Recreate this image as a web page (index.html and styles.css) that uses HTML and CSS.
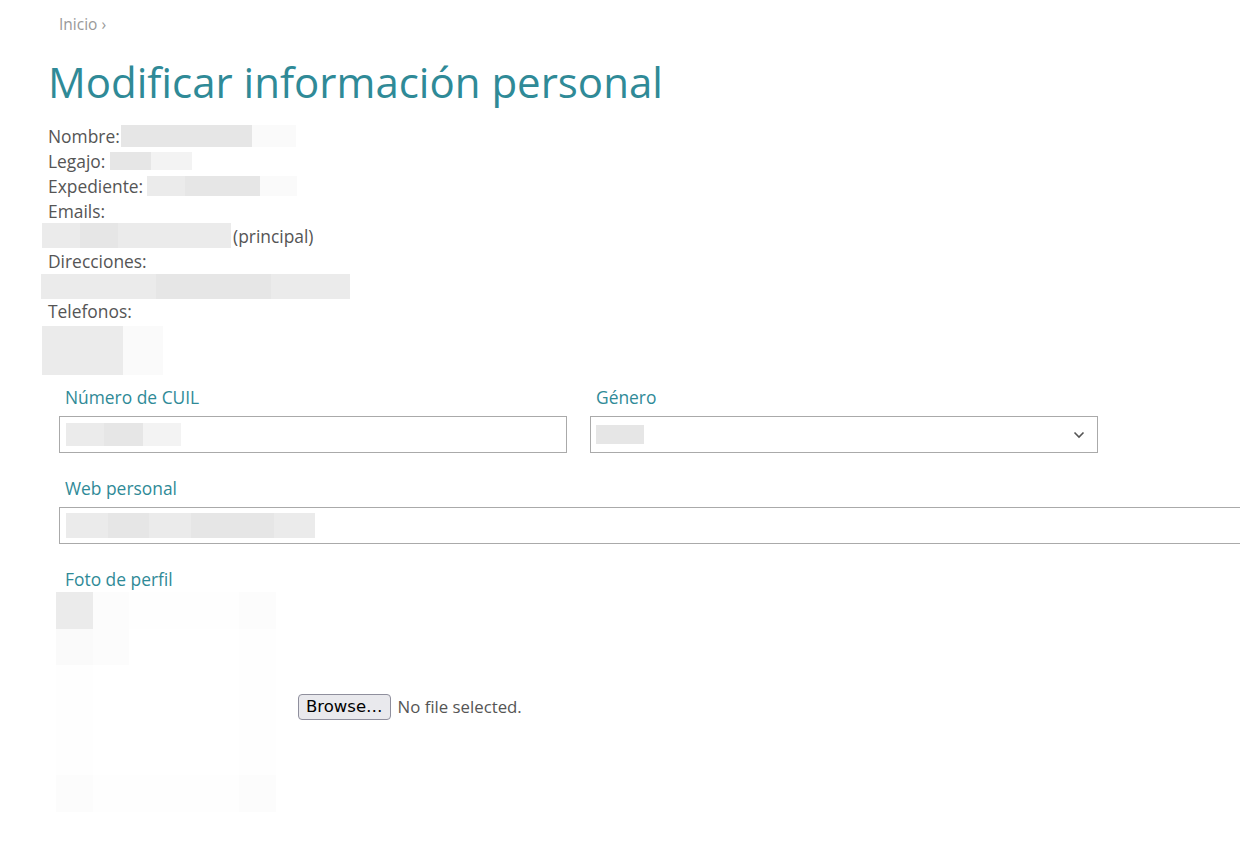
FILE: index.html
```html
<!DOCTYPE html>
<html lang="es">
<head>
    <meta charset="UTF-8">
    <meta name="viewport" content="width=device-width, initial-scale=1.0">
    <title>Modificar información personal</title>
    <link rel="stylesheet" href="styles.css">
</head>
<body>
    <div class="page">
        <div class="breadcrumb">Inicio ›</div>

        <h1>Modificar información personal</h1>

        <div class="info">
            <div class="info-line">Nombre:<span class="blur b-nombre"><i class="s1 w131"></i><i class="s4 w44"></i></span></div>
            <div class="info-line">Legajo:<span class="blur b-legajo"><i class="s1 w41"></i><i class="s3 w41"></i></span></div>
            <div class="info-line">Expediente:<span class="blur b-exp"><i class="s2 w38"></i><i class="s1 w75"></i><i class="s4 w37"></i></span></div>
            <div class="info-line">Emails:</div>
            <div class="info-line shift"><span class="blur b-email"><i class="s2 w38"></i><i class="s1 w38"></i><i class="s2 w113"></i></span>(principal)</div>
            <div class="info-line">Direcciones:</div>
            <div class="info-line shift"><span class="blur b-dir"><i class="s2 w39"></i><i class="s2 w76"></i><i class="s1 w115"></i><i class="s2 w79"></i></span></div>
            <div class="info-line">Telefonos:</div>
            <div class="phone"><i class="s2 w81"></i><i class="s4 w40"></i></div>
        </div>

        <form class="form">
            <div class="row">
                <div class="field">
                    <label for="cuil">Número de CUIL</label>
                    <div class="input" id="cuil"><span class="blur b-cuil"><i class="s2 w38"></i><i class="s1 w39"></i><i class="s3 w38"></i></span></div>
                </div>
                <div class="field">
                    <label for="genero">Género</label>
                    <div class="input select" id="genero">
                        <span class="blur b-gen"><i class="s1 w48"></i></span>
                        <svg class="chevron" width="12" height="8" viewBox="0 0 12 8"><path d="M1.5 1.5 L6 6 L10.5 1.5" fill="none" stroke="#555" stroke-width="1.6"/></svg>
                    </div>
                </div>
            </div>

            <div class="field">
                <label for="web">Web personal</label>
                <div class="input wide" id="web"><span class="blur b-web"><i class="s2 w42"></i><i class="s1 w41"></i><i class="s2 w42"></i><i class="s1 w83"></i><i class="s2 w41"></i></span></div>
            </div>

            <div class="field">
                <label>Foto de perfil</label>
                <div class="photo-row">
                    <div class="photo">
                        <i class="p1"></i><i class="p5"></i><i class="p6"></i><i class="p6"></i><i class="p6"></i><i class="p5"></i>
                        <i class="p4"></i><i class="p5"></i><i></i><i></i><i></i><i class="p6"></i>
                        <i class="p6"></i><i></i><i></i><i></i><i></i><i class="p6"></i>
                        <i class="p6"></i><i></i><i></i><i></i><i></i><i class="p6"></i>
                        <i class="p6"></i><i></i><i></i><i></i><i></i><i class="p6"></i>
                        <i class="p5"></i><i class="p6"></i><i class="p6"></i><i class="p6"></i><i class="p6"></i><i class="p5"></i>
                    </div>
                    <div class="file">
                        <button type="button" class="browse">Browse…</button>
                        <span class="file-name">No file selected.</span>
                    </div>
                </div>
            </div>
        </form>
    </div>
</body>
</html>
```

FILE: styles.css
```css
body {
    margin: 0;
    font-family: "Open Sans", "Liberation Sans", sans-serif;
    color: #555;
    background-color: white;
    overflow: hidden;
}

.page {
    padding: 14px 0 0 48px;
}

.breadcrumb {
    padding-left: 11px;
    font-size: 15.5px;
    color: #999;
    line-height: 20px;
}

h1 {
    margin: 20px 0 13px;
    font-size: 42px;
    font-weight: 400;
    line-height: 56px;
    color: #2f8a97;
}

.info {
    font-size: 17.4px;
}

.info-line {
    display: flex;
    align-items: center;
    height: 25px;
}

.info-line.shift {
    margin-left: -6px;
}

.blur {
    display: inline-flex;
    height: 22px;
}

.blur i, .phone i, .photo i {
    display: block;
    height: 100%;
}

.b-nombre { margin-left: 1px; }
.b-legajo { height: 18px; margin-left: 5px; }
.b-exp { height: 20px; margin-left: 4px; }
.b-email { height: 25px; margin-right: 2px; }
.b-dir { height: 25px; margin-left: -1px; margin-top: 2px; }

.phone {
    display: flex;
    height: 49px;
    margin: 3px 0 0 -6px;
}

.s1 { background-color: #e6e6e6; }
.s2 { background-color: #ebebeb; }
.s3 { background-color: #f3f3f3; }
.s4 { background-color: #fafafa; }

.w37 { width: 37px; }
.w38 { width: 38px; }
.w39 { width: 39px; }
.w40 { width: 40px; }
.w41 { width: 41px; }
.w42 { width: 42px; }
.w44 { width: 44px; }
.w48 { width: 48px; }
.w75 { width: 75px; }
.w76 { width: 76px; }
.w79 { width: 79px; }
.w81 { width: 81px; }
.w83 { width: 83px; }
.w113 { width: 113px; }
.w115 { width: 115px; }
.w131 { width: 131px; }

.form {
    margin: 11px 0 0 11px;
}

.row {
    display: flex;
    gap: 23px;
}

.field {
    margin-bottom: 24px;
}

label {
    display: block;
    padding-left: 6px;
    font-size: 17.4px;
    line-height: 22px;
    color: #2f8a97;
    margin-bottom: 8px;
}

.input {
    display: flex;
    align-items: center;
    box-sizing: border-box;
    width: 508px;
    height: 37px;
    padding: 0 6px;
    border: 1px solid #aaa;
}

.input.wide {
    width: 1200px;
}

.b-cuil { height: 23px; }
.b-gen { height: 19px; margin-left: -1px; }
.b-web { height: 25px; }

.select {
    justify-content: space-between;
    padding-right: 12px;
}

.photo-row {
    display: flex;
    align-items: center;
    margin-top: -6px;
    margin-left: -3px;
}

.photo {
    display: grid;
    grid-template-columns: repeat(6, 36.6px);
    grid-template-rows: repeat(6, 36.6px);
    width: 220px;
    height: 220px;
}

.p1 { background-color: #ebebeb; }
.p4 { background-color: #fafafa; }
.p5 { background-color: #fcfcfc; }
.p6 { background-color: #fefefe; }

.file {
    display: flex;
    align-items: center;
    gap: 7px;
    margin-left: 22px;
    margin-top: 9px;
}

.browse {
    font-family: "DejaVu Sans", sans-serif;
    font-size: 16.5px;
    color: #000;
    background-color: #e9e9ed;
    border: 1px solid #8f8f9d;
    border-radius: 4px;
    padding: 0 7px;
    height: 26px;
    line-height: 22px;
}

.file-name {
    font-size: 16.8px;
}
```
